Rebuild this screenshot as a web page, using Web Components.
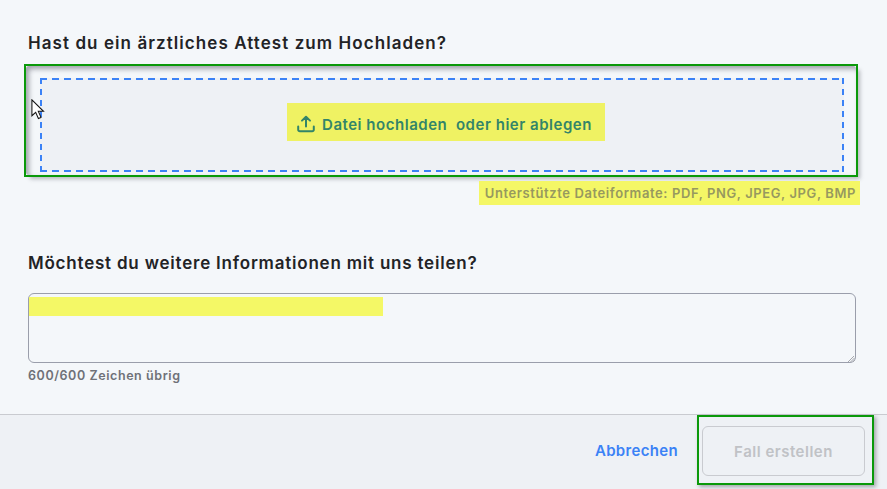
<!DOCTYPE html>
<html lang="de">
<head>
<meta charset="utf-8">
<title>Fall erstellen</title>
<style>
  html, body { margin: 0; height: 100%; }
  body { background: #f4f7fa; font-family: "Inter", "Liberation Sans", sans-serif; color: #222326; overflow: hidden; }
</style>
</head>
<body>
<case-form>
  <field-title>Hast du ein ärztliches Attest zum Hochladen?</field-title>
  <file-drop hint="Unterstützte Dateiformate: PDF, PNG, JPEG, JPG, BMP"></file-drop>
  <field-title class="second">Möchtest du weitere Informationen mit uns teilen?</field-title>
  <notes-field max="600"></notes-field>
</case-form>
<action-bar></action-bar>

<script>
class FieldTitle extends HTMLElement {
  constructor() {
    super()
    this.attachShadow({ mode: 'open' }).innerHTML = `
      <style>
        :host { display: block; font-size: 17px; line-height: 20px; font-weight: 600; letter-spacing: 1.07px; color: #222326; white-space: nowrap; }
      </style>
      <slot></slot>`
  }
}

class FileDrop extends HTMLElement {
  constructor() {
    super()
    this.attachShadow({ mode: 'open' }).innerHTML = `
      <style>
        :host { display: block; position: relative; }
        .frame {
          outline: 2px solid #0a990a;
          box-shadow: 4px 4px 4px rgba(70, 70, 80, .35);
          margin-left: -2px;
          background: #f4f7fa;
          height: 109px;
        }
        .zone {
          height: 100%;
          box-sizing: border-box;
          padding: 12px 12px 3px 14px;
          background: #f4f7fa;
          box-shadow: inset 3px 3px 5px rgba(80, 80, 95, .5);
          border-radius: 3px;
        }
        .dash {
          height: 94px;
          box-sizing: border-box;
          padding: 0 0 6px 8px;
          background:
            repeating-linear-gradient(90deg, #3b82f6 0 7px, transparent 7px 12px) top left / 100% 2px no-repeat,
            repeating-linear-gradient(90deg, #3b82f6 0 7px, transparent 7px 12px) bottom left / 100% 2px no-repeat,
            repeating-linear-gradient(180deg, #3b82f6 0 6px, transparent 6px 11px) top left / 2px 100% no-repeat,
            repeating-linear-gradient(180deg, #3b82f6 0 6px, transparent 6px 11px) top right / 2px 100% no-repeat,
            #eef1f5;
          display: flex;
          align-items: center;
          justify-content: center;
        }
        .label {
          box-sizing: border-box;
          display: flex;
          align-items: center;
          gap: 7px;
          height: 38px;
          padding: 5px 13px 0 10px;
          background: #eff263;
          color: #338569;
          font-size: 15px;
          font-weight: 600;
          letter-spacing: .53px;
          white-space: pre;
        }
        .label svg { margin-top: -1px; }
        .hint-row { display: flex; justify-content: flex-end; margin: 6px -4px 0 0; }
        .hint {
          background: #f4f766;
          color: #97995f;
          font-size: 13px;
          font-weight: 600;
          letter-spacing: .6px;
          line-height: 24px;
          white-space: nowrap;
          padding: 0 4px 0 6px;
        }
        svg { display: block; }
        .cursor { position: absolute; left: 3px; top: 33px; }
      </style>
      <div class="frame">
        <div class="zone">
          <div class="dash">
            <div class="label">
              <svg width="18" height="18" viewBox="0 0 18 18" fill="none" stroke="#338569" stroke-width="2" stroke-linecap="round" stroke-linejoin="round">
                <path d="M9 11.5V2M5 5.6 9 1.8l4 3.8M1.2 11.5v3.2a1.6 1.6 0 0 0 1.6 1.6h12.4a1.6 1.6 0 0 0 1.6-1.6v-3.2"/>
              </svg>
              <span>Datei hochladen  oder hier ablegen</span>
            </div>
          </div>
        </div>
      </div>
      <div class="hint-row"><div class="hint"></div></div>
      <svg class="cursor" width="15" height="23" viewBox="0 0 14 22">
        <path d="M.7.8V16l3.6-3.3 2.6 6 2.5-1.1-2.6-5.8h5z" fill="#fff" stroke="#111" stroke-width="1"/>
      </svg>`
  }

  connectedCallback() {
    this.shadowRoot.querySelector('.hint').textContent = this.getAttribute('hint')
  }
}

class NotesField extends HTMLElement {
  constructor() {
    super()
    this.attachShadow({ mode: 'open' }).innerHTML = `
      <style>
        :host { display: block; position: relative; }
        textarea {
          display: block;
          width: 100%;
          height: 70px;
          box-sizing: border-box;
          margin: 0;
          border: 1px solid #9a9eab;
          border-radius: 6px;
          background: #f4f7fa;
          outline: none;
          resize: none;
        }
        .mark { position: absolute; left: 1px; top: 4px; width: 354px; height: 19px; background: #f4f866; }
        .grip { position: absolute; right: 1px; top: 63px; display: block; }
        .count { margin-top: 5px; font-size: 12.5px; line-height: 16px; font-weight: 600; letter-spacing: .58px; color: #6f7178; }
      </style>
      <textarea></textarea>
      <div class="mark"></div>
      <svg class="grip" width="7" height="6" viewBox="0 0 7 6" fill="none" stroke="#a6a8ae" stroke-width="1">
        <path d="M0 6 6 0M2.5 6 6.5 2M5 6 7 4"/>
      </svg>
      <div class="count"></div>`
  }

  connectedCallback() {
    const max = this.getAttribute('max')
    this.shadowRoot.querySelector('.count').textContent = `${max}/${max} Zeichen übrig`
  }
}

class ActionBar extends HTMLElement {
  constructor() {
    super()
    this.attachShadow({ mode: 'open' }).innerHTML = `
      <style>
        :host {
          display: flex;
          align-items: center;
          justify-content: flex-end;
          box-sizing: border-box;
          height: 75px;
          padding: 0 13px 4px 0;
          border-top: 1px solid #c9cbd0;
          background: #eef1f5;
        }
        a { color: #3b82f6; font-size: 15px; font-weight: 600; letter-spacing: .33px; margin-right: 19px; }
        .hl {
          padding: 11px 9px 9px 5px;
          outline: 2px solid #0a990a;
          outline-offset: -2px;
          box-shadow: 2px 2px 4px rgba(70, 70, 80, .45);
        }
        button {
          display: block;
          width: 163px;
          height: 50px;
          border: 1px solid #c9cbd0;
          border-radius: 6px;
          background: #eef1f5;
          color: #c0c2c6;
          font: 600 15px "Inter", "Liberation Sans", sans-serif;
          letter-spacing: .5px;
        }
      </style>
      <a>Abbrechen</a>
      <div class="hl"><button disabled>Fall erstellen</button></div>`
  }
}

class CaseForm extends HTMLElement {
  constructor() {
    super()
    this.attachShadow({ mode: 'open' }).innerHTML = `
      <style>
        :host { display: block; height: 414px; box-sizing: border-box; padding: 33px 31px 0 28px; }
        ::slotted(field-title) { margin-bottom: 13px; }
        ::slotted(field-title.second) { margin-top: 48px; margin-bottom: 20px; letter-spacing: .79px; }
      </style>
      <slot></slot>`
  }
}

customElements.define('field-title', FieldTitle)
customElements.define('file-drop', FileDrop)
customElements.define('notes-field', NotesField)
customElements.define('action-bar', ActionBar)
customElements.define('case-form', CaseForm)
</script>
</body>
</html>
